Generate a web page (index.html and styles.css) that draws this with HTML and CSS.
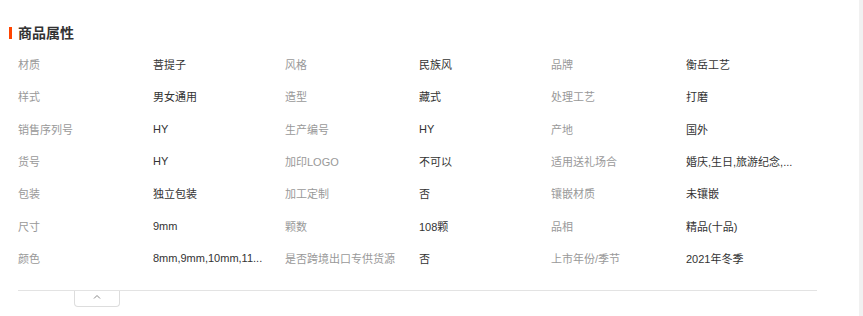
FILE: index.html
```html
<!DOCTYPE html>
<html lang="zh-CN">
<head>
<meta charset="utf-8">
<title>商品属性</title>
<link rel="stylesheet" href="styles.css">
</head>
<body>
<div class="page">
  <main class="main">
    <h2 class="title"><span class="bar"></span>商品属性</h2>
    <div class="attrs">
      <span class="k">材质</span><span class="v">菩提子</span>
      <span class="k">风格</span><span class="v">民族风</span>
      <span class="k">品牌</span><span class="v">衡岳工艺</span>

      <span class="k">样式</span><span class="v">男女通用</span>
      <span class="k">造型</span><span class="v">藏式</span>
      <span class="k">处理工艺</span><span class="v">打磨</span>

      <span class="k">销售序列号</span><span class="v">HY</span>
      <span class="k">生产编号</span><span class="v">HY</span>
      <span class="k">产地</span><span class="v">国外</span>

      <span class="k">货号</span><span class="v">HY</span>
      <span class="k">加印LOGO</span><span class="v">不可以</span>
      <span class="k">适用送礼场合</span><span class="v">婚庆,生日,旅游纪念,...</span>

      <span class="k">包装</span><span class="v">独立包装</span>
      <span class="k">加工定制</span><span class="v">否</span>
      <span class="k">镶嵌材质</span><span class="v">未镶嵌</span>

      <span class="k">尺寸</span><span class="v">9mm</span>
      <span class="k">颗数</span><span class="v">108颗</span>
      <span class="k">品相</span><span class="v">精品(十品)</span>

      <span class="k">颜色</span><span class="v">8mm,9mm,10mm,11...</span>
      <span class="k">是否跨境出口专供货源</span><span class="v">否</span>
      <span class="k">上市年份/季节</span><span class="v">2021年冬季</span>
    </div>
    <div class="divider"></div>
    <button class="toggle" type="button" aria-label="收起">
      <svg width="8" height="5" viewBox="0 0 8 5"><polyline points="1,4.5 4,1.5 7,4.5" fill="none" stroke="#888" stroke-width="1"/></svg>
    </button>
  </main>
  <div class="scroll"></div>
</div>
</body>
</html>
```
FILE: styles.css
```css
html, body {
  margin: 0;
  padding: 0;
  background: #fff;
}
body {
  font-family: "Liberation Sans", "Noto Sans CJK SC", sans-serif;
  color: #333;
}
.page {
  display: flex;
  height: 316px;
  overflow: hidden;
}
.main {
  flex: 1;
  padding-top: 24px;
}
.scroll {
  width: 4px;
  background: #f1f1f1;
}
.title {
  display: flex;
  align-items: center;
  gap: 6px;
  margin: 0 0 0 9px;
  height: 18px;
  font-size: 14px;
  font-weight: bold;
  color: #333;
  line-height: 18px;
}
.bar {
  width: 3px;
  height: 12px;
  background: #ff4400;
}
.attrs {
  display: grid;
  grid-template-columns: 135px 132px 134px 132px 135px 1fr;
  grid-auto-rows: 32.33px;
  align-items: center;
  margin: 6px 0 0 18px;
  font-size: 11px;
}
.k {
  color: #999;
}
.v {
  color: #333;
  max-width: 110px;
  white-space: nowrap;
  overflow: hidden;
  text-overflow: ellipsis;
}
.divider {
  margin: 16px 0 0 18px;
  width: 799px;
  height: 1px;
  background: #e3e3e3;
}
.toggle {
  display: flex;
  justify-content: center;
  align-items: flex-start;
  margin: 0 0 0 74px;
  padding: 3px 0 0;
  width: 46px;
  height: 16px;
  border: 1px solid #ddd;
  border-top: none;
  border-radius: 0 0 4px 4px;
  background: #fff;
}
```
